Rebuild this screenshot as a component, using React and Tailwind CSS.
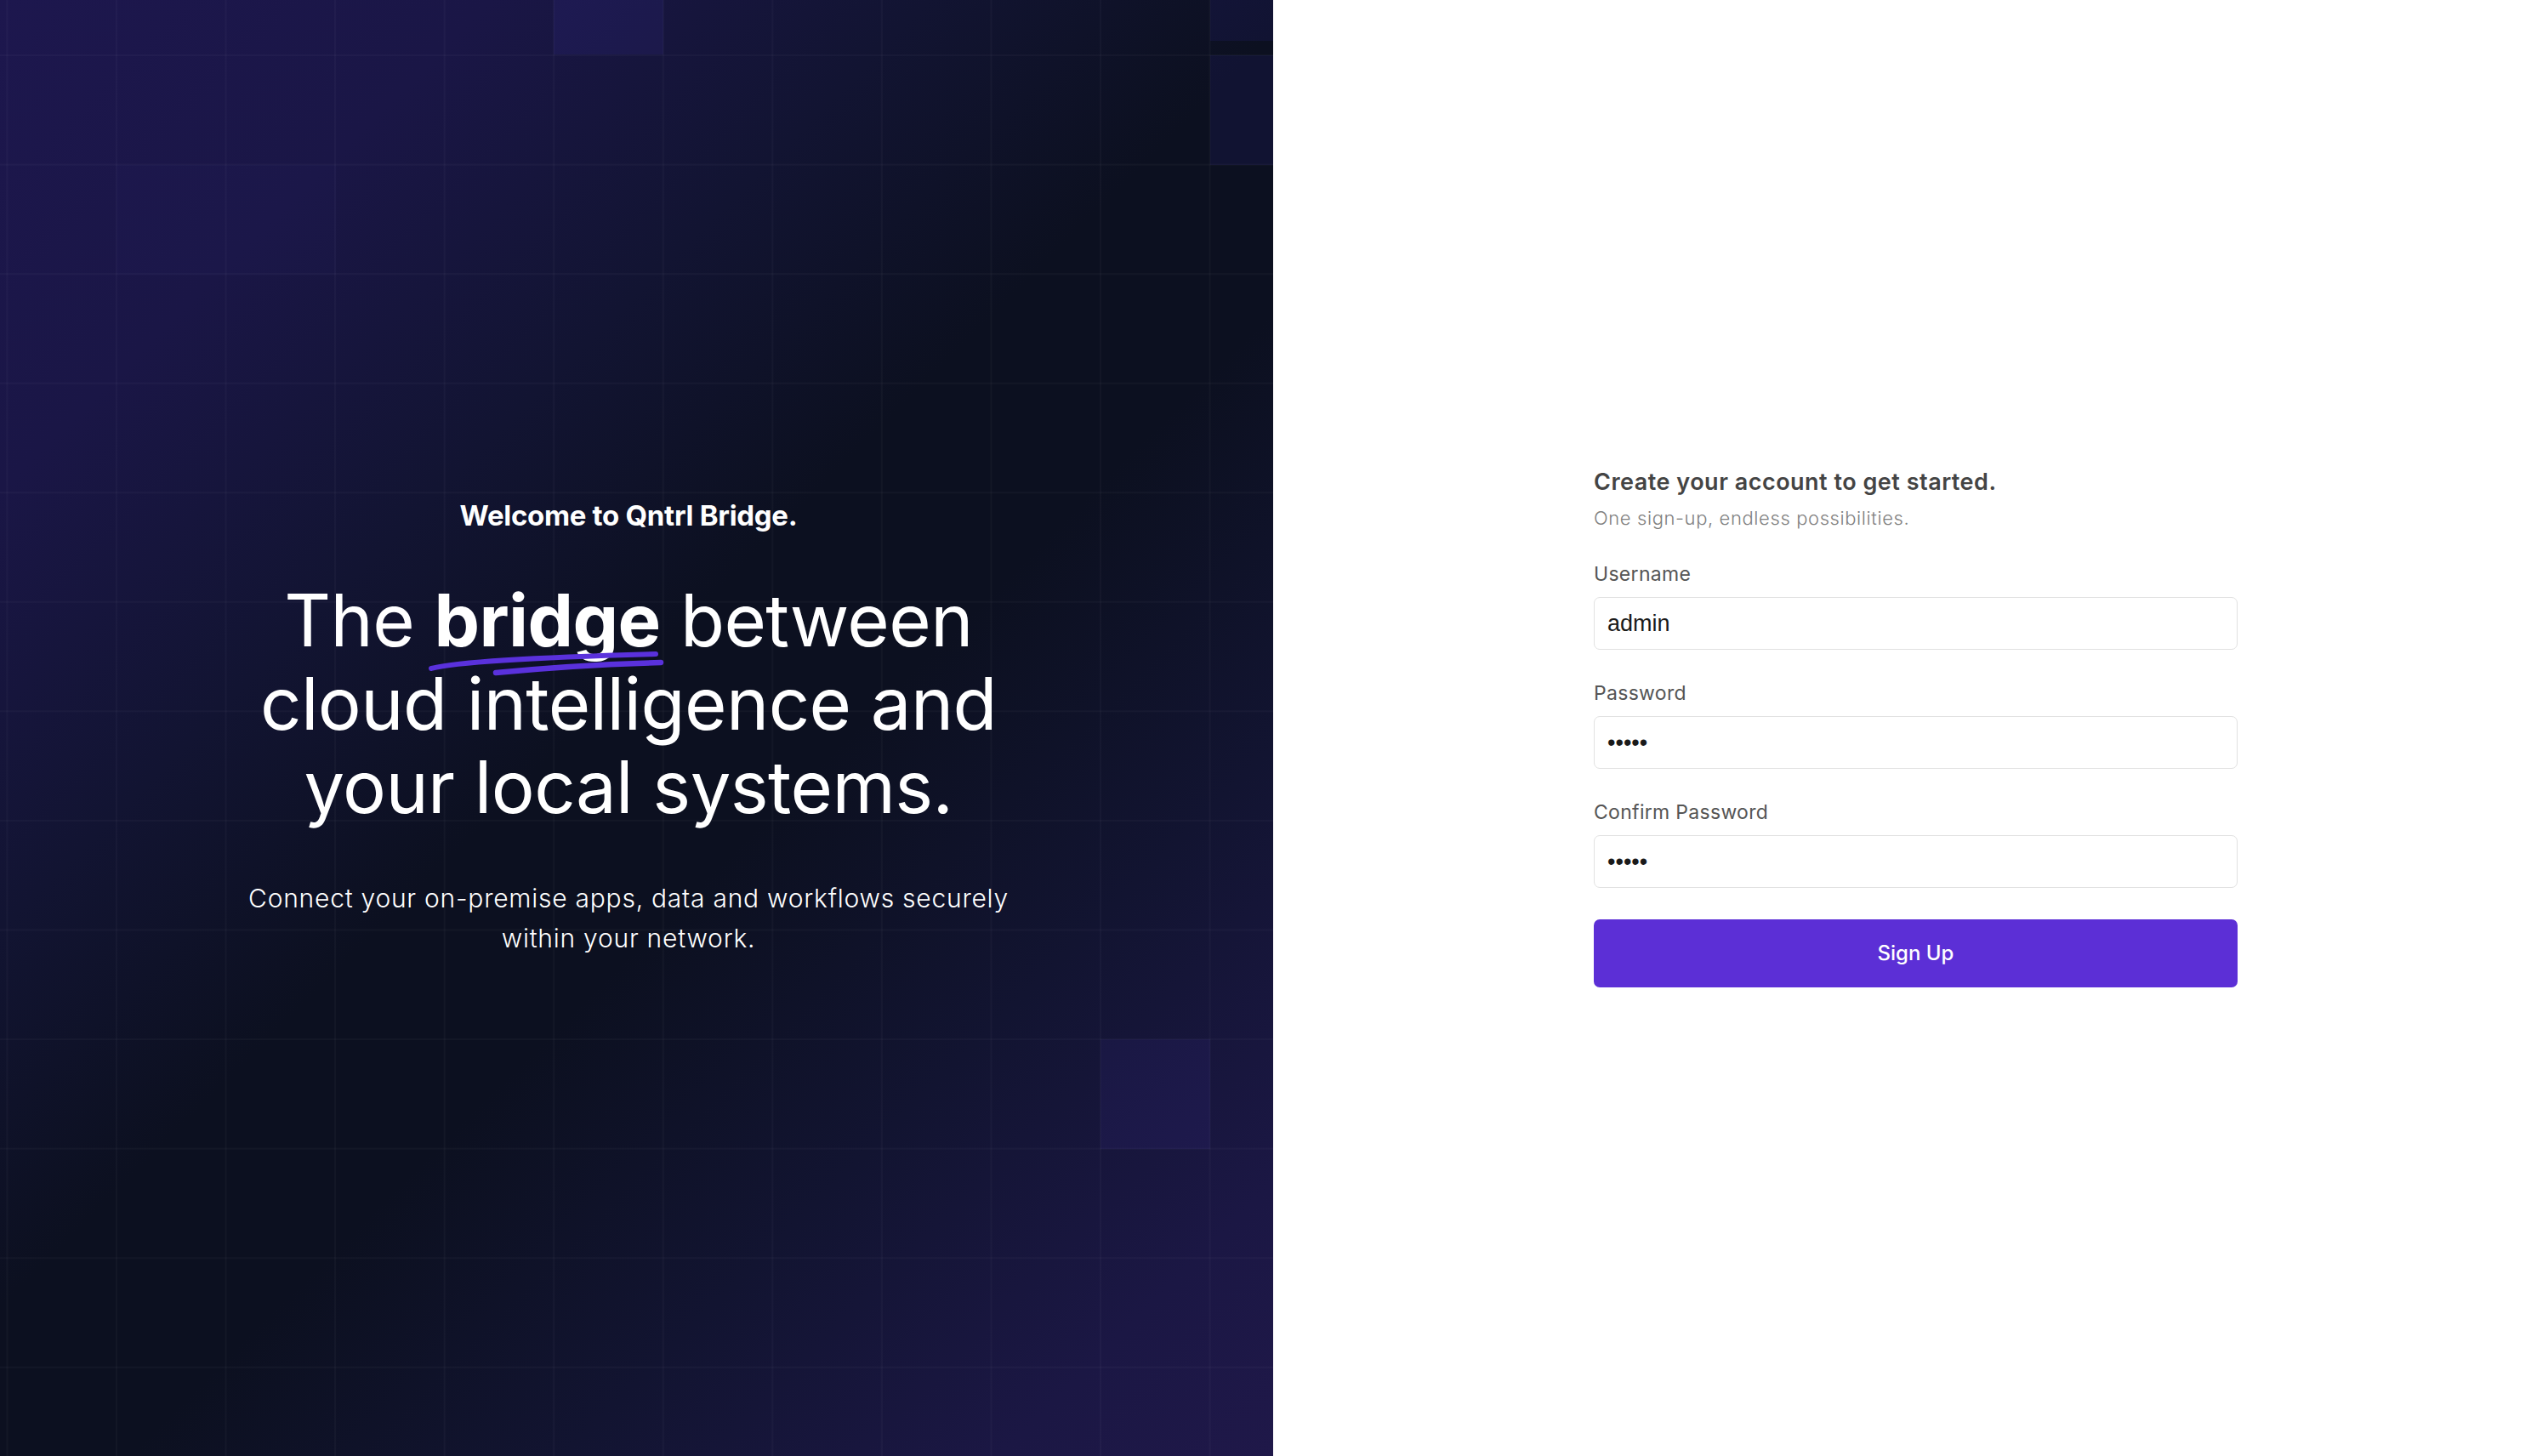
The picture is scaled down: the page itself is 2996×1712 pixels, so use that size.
import React from "react";

function Field({ label, type, value }) {
  return (
    <div className="flex flex-col">
      <label className="text-[23px] leading-[28px] tracking-[0.3px] text-[#555555]">{label}</label>
      <input
        type={type}
        defaultValue={value}
        readOnly
        className="mt-[13px] h-[62px] w-full rounded-[7px] border border-[#e1e1e1] bg-white px-[15px] font-['Liberation_Sans',Arial,sans-serif] text-[27px] text-[#1a1a1a] outline-none"
      />
    </div>
  );
}

export default function App() {
  return (
    <div className="flex h-[1712px] w-[2996px] overflow-hidden font-['Inter','Noto_Sans',sans-serif]">
      {/* Left hero panel */}
      <div className="relative h-full w-[1497px] shrink-0 overflow-hidden bg-[linear-gradient(135deg,#1d174e_0%,#1a1646_18%,#121432_34%,#0c1020_48%,#0c1020_58%,#121431_74%,#1b1744_90%,#1f1849_100%)]">
        {/* highlighted grid cells */}
        <div className="absolute left-[651px] top-0 h-[64px] w-[129px] bg-[rgba(90,70,230,0.09)]" />
        <div className="absolute left-[1423px] top-0 h-[48px] w-[80px] bg-[rgba(70,50,220,0.10)]" />
        <div className="absolute left-[1423px] top-[65px] h-[129px] w-[80px] bg-[rgba(70,50,220,0.10)]" />
        <div className="absolute left-[1294px] top-[1222px] h-[129px] w-[129px] bg-[rgba(90,70,230,0.08)]" />
        <div className="absolute left-[137px] top-[194px] h-[129px] w-[258px] bg-[rgba(90,70,230,0.025)]" />
        {/* grid lines */}
        <div className="absolute inset-0 bg-[linear-gradient(to_right,rgba(255,255,255,0.026)_2px,transparent_2px),linear-gradient(to_bottom,rgba(255,255,255,0.026)_2px,transparent_2px)] bg-[size:128.57px_128.57px] bg-[position:7.4px_64px]" />

        <div className="relative flex h-full flex-col items-center justify-center pr-[19px] text-center text-white">
          <p className="text-[33px] font-bold leading-[40px] tracking-[-0.3px]">Welcome to Qntrl Bridge.</p>
          <h1 className="mt-[55px] text-[85px] font-normal leading-[98px] tracking-[-0.6px]">
            The{" "}
            <span className="relative font-bold">
              bridge
              <svg
                className="absolute left-[-7px] top-[86px] overflow-visible"
                width="282"
                height="32"
                viewBox="0 0 282 32"
                fill="none"
              >
                <path d="M4 22 C 30 15, 120 9, 268 5" stroke="#5a31dc" strokeWidth="6" strokeLinecap="round" />
                <path d="M80 27 C 130 22, 200 17, 274 15" stroke="#5a31dc" strokeWidth="6.5" strokeLinecap="round" />
              </svg>
            </span>{" "}
            between
            <br />
            cloud intelligence and
            <br />
            your local systems.
          </h1>
          <p className="mt-[58px] text-[30px] font-light leading-[47px] tracking-[0.75px]">
            Connect your on-premise apps, data and workflows securely
            <br />
            within your network.
          </p>
        </div>
      </div>

      {/* Right form panel */}
      <div className="flex h-full flex-1 items-center justify-center bg-white pl-[12px]">
        <div className="flex w-[757px] flex-col">
          <h2 className="text-[27px] font-semibold leading-[32px] tracking-[0.5px] text-[#444444]">Create your account to get started.</h2>
          <p className="mt-[12px] text-[22px] font-light leading-[28px] tracking-[0.6px] text-[#808080]">One sign-up, endless possibilities.</p>
          <div className="mt-[38px] flex flex-col gap-[37px]">
            <Field label="Username" type="text" value="admin" />
            <Field label="Password" type="password" value="admin" />
            <Field label="Confirm Password" type="password" value="admin" />
          </div>
          <button className="mt-[37px] h-[80px] w-full rounded-[7px] bg-[#5c2fd6] text-[24px] font-medium text-white">
            Sign Up
          </button>
        </div>
      </div>
    </div>
  );
}
